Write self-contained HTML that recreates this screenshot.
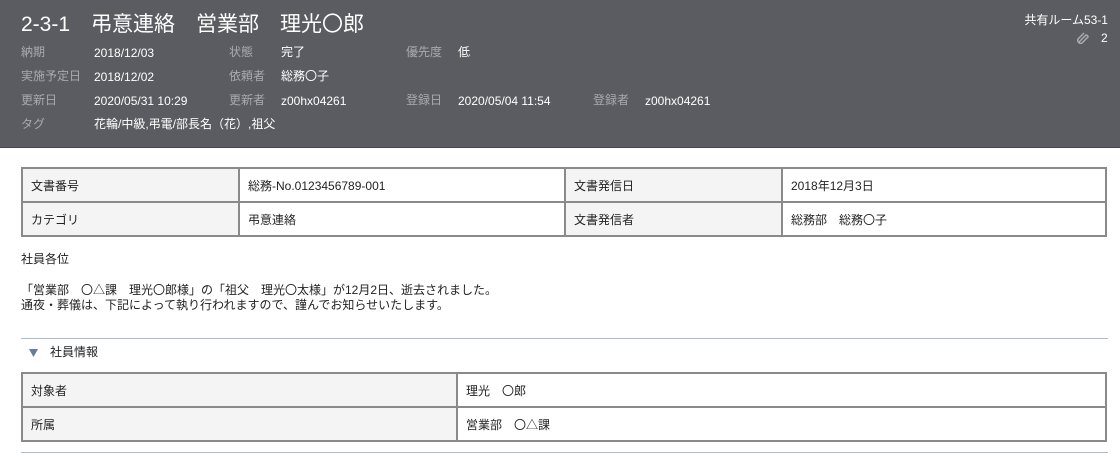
<!DOCTYPE html>
<html><head><meta charset="utf-8"><style>
*{margin:0;padding:0;box-sizing:border-box}
body{width:1120px;height:456px;background:#fff;font-family:"Liberation Sans","Noto Sans CJK JP",sans-serif;font-size:12px;color:#222;position:relative;overflow:hidden}
.hd{position:absolute;left:0;top:0;width:1120px;height:148px;background:#5b5c62;border-bottom:1px solid #48494e}
.a{position:absolute;white-space:nowrap;line-height:16px}
.a span{vertical-align:top}
.t{font-size:21px;color:#fff;left:21px;top:12px;line-height:26px}
.l{color:#a9aaae}
.v{color:#fff}
table{position:absolute;border-collapse:collapse;left:21px;width:1086px}
td{border:2px solid #8a8a8a;height:34px;padding:0 8px;font-size:12px}
td.k{background:#f4f4f4}
.hr{position:absolute;left:21px;width:1087px;height:1px;background:#a9bbdc}
</style></head><body>
<div class="hd">
<div class="a t">2-3-1　弔意連絡　営業部　理光〇郎</div>
<div class="a l" style="left:21px;top:44px">納期</div><div class="a v" style="left:94px;top:45px">2018/12/03</div>
<div class="a l" style="left:229px;top:44px">状態</div><div class="a v" style="left:281px;top:44px">完了</div>
<div class="a l" style="left:406px;top:44px">優先度</div><div class="a v" style="left:458px;top:44px">低</div>
<div class="a l" style="left:21px;top:68px">実施予定日</div><div class="a v" style="left:94px;top:69px">2018/12/02</div>
<div class="a l" style="left:229px;top:68px">依頼者</div><div class="a v" style="left:281px;top:68px">総務〇子</div>
<div class="a l" style="left:21px;top:92px">更新日</div><div class="a v" style="left:94px;top:93px">2020/05/31 10:29</div>
<div class="a l" style="left:229px;top:92px">更新者</div><div class="a v" style="left:281px;top:93px">z00hx04261</div>
<div class="a l" style="left:406px;top:92px">登録日</div><div class="a v" style="left:458px;top:93px">2020/05/04 11:54</div>
<div class="a l" style="left:593px;top:92px">登録者</div><div class="a v" style="left:645px;top:93px">z00hx04261</div>
<div class="a l" style="left:21px;top:116px">タグ</div><div class="a v" style="left:94px;top:116px">花輪/中級,弔電/部長名（花）,祖父</div>
<div class="a v" style="right:12px;top:12px">共有ルーム53-1</div>
<svg class="a" style="left:1076px;top:32px" width="14" height="12" viewBox="0 0 14 12"><path d="M3 10 L10 3 A2 2 0 0 1 12 5 L6 11 A3 3 0 0 1 2 7 L8 1" fill="none" stroke="#a9aaae" stroke-width="1.5"/></svg>
<div class="a v" style="left:1101px;top:30px">2</div>
</div>
<table style="top:167px"><tr><td class="k" style="width:217px">文書番号</td><td style="width:326px">総務-No.0123456789-001</td><td class="k" style="width:217px">文書発信日</td><td>2018年12月3日</td></tr>
<tr><td class="k">カテゴリ</td><td>弔意連絡</td><td class="k">文書発信者</td><td>総務部　総務〇子</td></tr></table>
<div class="a" style="left:21px;top:251px">社員各位</div>
<div class="a" style="left:21px;top:283px;line-height:15px">「営業部　〇△課　理光〇郎様」の「祖父　理光〇太様」が12月2日、逝去されました。<br>通夜・葬儀は、下記によって執り行われますので、謹んでお知らせいたします。</div>
<div class="hr" style="top:338px"></div>
<svg class="a" style="left:29px;top:349px" width="9" height="8" viewBox="0 0 9 8"><path d="M0 0H9L4.5 8Z" fill="#6a7ba0"/></svg>
<div class="a" style="left:50px;top:344px">社員情報</div>
<table style="top:372px"><tr><td class="k" style="width:435px">対象者</td><td>理光　〇郎</td></tr><tr><td class="k">所属</td><td>営業部　〇△課</td></tr></table>
<div class="hr" style="top:452px"></div>
</body></html>
